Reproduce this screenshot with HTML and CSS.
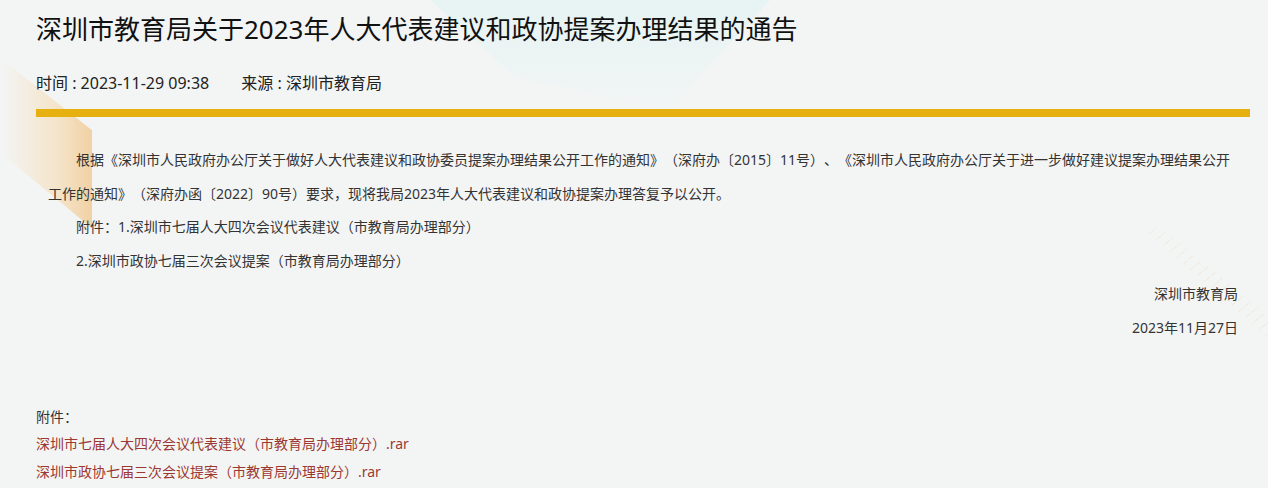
FILE: index.html
```html
<!DOCTYPE html>
<html lang="zh-CN">
<head>
    <meta charset="UTF-8">
    <meta name="viewport" content="width=device-width, initial-scale=1.0">
    <title>深圳市教育局关于2023年人大代表建议和政协提案办理结果的通告</title>
    <link rel="stylesheet" href="styles.css">
</head>
<body>
    <div class="deco deco-left"></div>
    <div class="deco deco-cyan"></div>
    <div class="deco deco-right"></div>

    <main class="page">
        <header class="article-head">
            <h1>深圳市教育局关于2023年人大代表建议和政协提案办理结果的通告</h1>
            <div class="meta">
                <span class="meta-item">时间 : 2023-11-29 09:38</span>
                <span class="meta-item">来源 : 深圳市教育局</span>
            </div>
        </header>

        <div class="gold-bar"></div>

        <article class="article-body">
            <p class="indent">根据《深圳市人民政府办公厅关于做好人大代表建议和政协委员提案办理结果公开工作的通知》（深府办〔2015〕11号）、《深圳市人民政府办公厅关于进一步做好建议提案办理结果公开工作的通知》（深府办函〔2022〕90号）要求，现将我局2023年人大代表建议和政协提案办理答复予以公开。</p>
            <p class="indent">附件：1.深圳市七届人大四次会议代表建议（市教育局办理部分）</p>
            <p class="indent">2.深圳市政协七届三次会议提案（市教育局办理部分）</p>
            <p class="sign">深圳市教育局</p>
            <p class="sign">2023年11月27日</p>
        </article>

        <section class="attachments">
            <div class="att-title">附件：</div>
            <a class="att-link" href="#">深圳市七届人大四次会议代表建议（市教育局办理部分）.rar</a>
            <a class="att-link" href="#">深圳市政协七届三次会议提案（市教育局办理部分）.rar</a>
        </section>
    </main>
</body>
</html>
```

FILE: styles.css
```css
body {
    margin: 0;
    background: #f3f5f5;
    color: #222;
    font-family: "Noto Sans", "Noto Sans CJK SC", sans-serif;
    text-spacing-trim: space-all;
    overflow: hidden;
}

/* background decoration */
.deco {
    position: absolute;
    z-index: 0;
    pointer-events: none;
}

.deco-left {
    left: 0;
    top: 58px;
    width: 92px;
    height: 172px;
    background: linear-gradient(90deg, rgba(250, 220, 175, 0) 0%, rgba(246, 205, 145, 0.45) 65%, rgba(240, 185, 110, 0.6) 100%);
    clip-path: polygon(0 0, 100% 42%, 100% 99%, 0 55%);
}

.deco-cyan {
    left: 430px;
    top: 0;
    width: 340px;
    height: 110px;
    background: linear-gradient(180deg, rgba(222, 243, 241, 0.6), rgba(230, 245, 243, 0.1));
    clip-path: polygon(0 0, 100% 0, 70% 100%, 25% 70%);
}

.deco-right {
    right: 0;
    top: 228px;
    width: 125px;
    height: 110px;
    background: repeating-linear-gradient(140deg, rgba(236, 220, 190, 0) 0 8px, rgba(236, 220, 190, 0.35) 8px 9px);
    clip-path: polygon(0 0, 15% 0, 100% 80%, 100% 100%);
}

.page {
    position: relative;
    z-index: 1;
    width: 1214px;
    padding-left: 36px;
}

.article-head {
    padding-top: 9px;
}

h1 {
    margin: 0;
    font-size: 26px;
    line-height: 40px;
    font-weight: normal;
    color: #111;
}

.meta {
    margin-top: 22px;
    font-size: 16px;
    line-height: 24px;
    color: #222;
}

.meta-item {
    margin-right: 28px;
}

.gold-bar {
    margin-top: 14px;
    height: 8px;
    background: #e6b011;
}

.article-body {
    padding: 26px 12px 0 12px;
    font-size: 14px;
    line-height: 33.6px;
    color: #333;
}

.article-body p {
    margin: 0;
}

.indent {
    text-indent: 2em;
}

.sign {
    text-align: right;
}

.attachments {
    margin-top: 58px;
    font-size: 14px;
    line-height: 27.5px;
}

.att-title {
    color: #333;
}

.att-link {
    display: block;
    color: #9c3832;
    text-decoration: none;
}
```
